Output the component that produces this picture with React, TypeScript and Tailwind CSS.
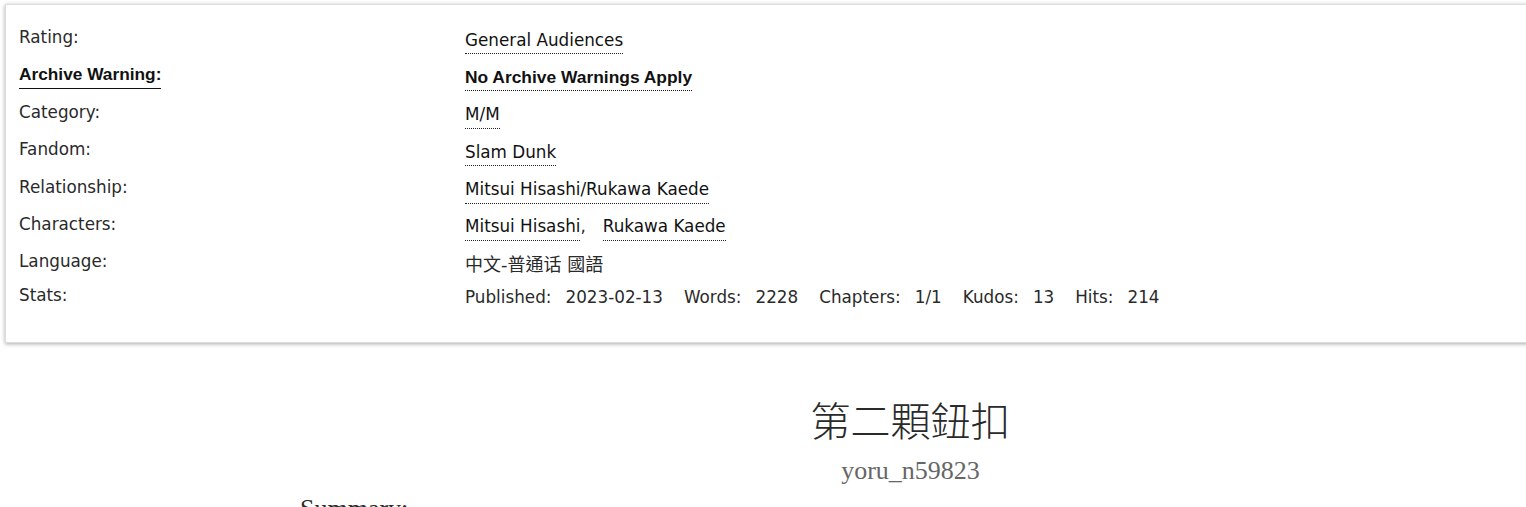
const sans = '[font-family:"DejaVu_Sans","Noto_Sans_CJK_TC",sans-serif]';

type Tag = { label: string; values?: string[]; bold?: boolean };

const rows: Tag[] = [
  { label: 'Rating:', values: ['General Audiences'] },
  { label: 'Archive Warning:', values: ['No Archive Warnings Apply'], bold: true },
  { label: 'Category:', values: ['M/M'] },
  { label: 'Fandom:', values: ['Slam Dunk'] },
  { label: 'Relationship:', values: ['Mitsui Hisashi/Rukawa Kaede'] },
  { label: 'Characters:', values: ['Mitsui Hisashi', 'Rukawa Kaede'] },
];

const stats = [
  ['Published:', '2023-02-13'],
  ['Words:', '2228'],
  ['Chapters:', '1/1'],
  ['Kudos:', '13'],
  ['Hits:', '214'],
];

function TagLink({ text, bold }: { text: string; bold?: boolean }) {
  return (
    <a
      className={
        bold
          ? 'block border-b border-dotted border-[#111] pb-[3.5px] font-["Liberation_Sans",sans-serif] text-[17.4px] font-bold leading-[19px] text-[#111]'
          : 'block border-b border-dotted border-[#222] pb-[3.5px] leading-[19px] text-[#111]'
      }
    >
      {text}
    </a>
  );
}

export default function App() {
  return (
    <div className="h-[507px] overflow-hidden bg-white text-[#2a2a2a]">
      {/* work meta box, runs off the right edge */}
      <div className="mt-[4px] ml-[5px] mr-[-20px] border border-[#ddd] shadow-[0_1px_4px_#aaa]">
        <div className={`${sans} pt-[23px] pb-[34.5px] pl-[13px] text-[16.8px] leading-[19px]`}>
          {rows.map((row) => (
            <div key={row.label} className="mb-[11.4px] flex items-start">
              <div className="flex w-[446px] shrink-0">
                {row.bold ? (
                  <span className='block border-b border-[#111] pb-[4px] font-["Liberation_Sans",sans-serif] text-[17.3px] font-bold leading-[19px] text-[#111]'>
                    {row.label}
                  </span>
                ) : (
                  <span>{row.label}</span>
                )}
              </div>
              <div className="flex items-start pt-[2.5px]">
                {row.values!.map((v, i) => (
                  <div key={v} className={`flex items-start ${i > 0 ? 'ml-[17px]' : ''}`}>
                    <TagLink text={v} bold={row.bold} />
                    {i < row.values!.length - 1 && <span>,</span>}
                  </div>
                ))}
              </div>
            </div>
          ))}

          <div className="mb-[12px] flex items-start">
            <div className="w-[446px] shrink-0">Language:</div>
            <div className="pt-[2.5px] text-[18px] leading-[19px]">中文-普通话 國語</div>
          </div>

          <div className="flex items-start">
            <div className="w-[446px] shrink-0">Stats:</div>
            <dl className="flex pt-[2.5px]">
              {stats.map(([k, v], i) => (
                <div key={k} className={`flex ${i > 0 ? 'ml-[21px]' : ''}`}>
                  <dt>{k}</dt>
                  <dd className="ml-[14px]">{v}</dd>
                </div>
              ))}
            </dl>
          </div>
        </div>
      </div>

      {/* preface */}
      <div className="ml-[295px] mt-[52px]">
        <h2 className='text-center font-["Noto_Sans_CJK_TC",sans-serif] text-[40px] font-light leading-[48px] text-[#2a2a2a]'>
          第二顆鈕扣
        </h2>
        <h3 className='mt-[13px] text-center font-["Liberation_Serif",serif] text-[26px] leading-[30px] text-[#666]'>
          yoru_n59823
        </h3>
        <h3 className='mt-[8px] pl-[5px] font-["Liberation_Serif",serif] text-[26px] leading-[30px] text-[#2a2a2a]'>
          Summary:
        </h3>
      </div>
    </div>
  );
}
